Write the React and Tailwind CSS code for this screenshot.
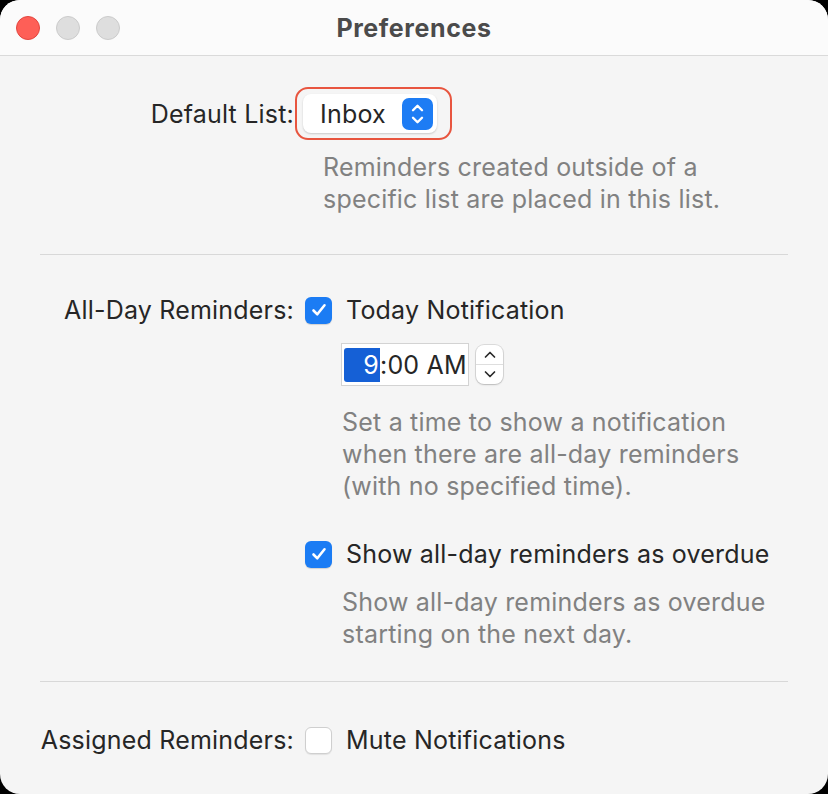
import React from 'react';

const font = { fontFamily: 'Inter, "Noto Sans", sans-serif' };

const Check = ({ checked }) => (
    checked ? (
        <div className="w-[27px] h-[27px] rounded-[6px] bg-[#1b7cf4] flex items-center justify-center shadow-[0_1px_1px_rgba(0,0,0,0.15)]">
            <svg width="18" height="18" viewBox="0 0 18 18" fill="none">
                <path d="M3.5 9.5 L7.3 13.3 L14.5 4.3" stroke="white" strokeWidth="2.6" strokeLinecap="round" strokeLinejoin="round" />
            </svg>
        </div>
    ) : (
        <div className="w-[27px] h-[27px] rounded-[6px] bg-white border border-[#cfcfcf] shadow-[0_1px_1px_rgba(0,0,0,0.08)]" />
    )
);

const Chevrons = ({ color, size = 16 }) => (
    <svg width={size} height={size * 1.6} viewBox="0 0 10 16" fill="none">
        <path d="M2 5.5 L5 2.5 L8 5.5" stroke={color} strokeWidth="1.6" strokeLinecap="round" strokeLinejoin="round" />
        <path d="M2 10.5 L5 13.5 L8 10.5" stroke={color} strokeWidth="1.6" strokeLinecap="round" strokeLinejoin="round" />
    </svg>
);

const Row = ({ label, children, className = '' }) => (
    <div className={`flex items-center ${className}`}>
        <div className="w-[296px] shrink-0 text-right pr-[2px] text-[#262626]">{label}</div>
        <div className="flex items-center">{children}</div>
    </div>
);

export default function App() {
    return (
        <div className="w-[828px] h-[794px] bg-black" style={font}>
            <div className="w-full h-full rounded-[20px] overflow-hidden bg-[#f5f5f5] flex flex-col text-[25px] leading-[32px] tracking-[0.2px]">
                <div className="h-[56px] shrink-0 bg-[#fbfbfb] border-b border-[#dadada] flex items-center relative">
                    <div className="flex items-center gap-[16px] pl-[16px]">
                        <div className="w-[24px] h-[24px] rounded-full bg-[#fe5f57] border border-[#e2463f]" />
                        <div className="w-[24px] h-[24px] rounded-full bg-[#dedede] border border-[#cbcbcb]" />
                        <div className="w-[24px] h-[24px] rounded-full bg-[#dedede] border border-[#cbcbcb]" />
                    </div>
                    <div className="absolute inset-0 flex items-center justify-center font-bold text-[#4b4b4b] text-[25px] tracking-[0.6px]">Preferences</div>
                </div>

                <div className="flex flex-col">
                    <Row label="Default List:" className="mt-[31px]">
                        <div className="ml-[-1px] h-[53px] w-[157px] rounded-[13px] border-[2px] border-[#e8553f] flex items-center pl-[6px] pr-[13px]">
                            <div className="h-[39px] w-full rounded-[8px] bg-white shadow-[0_1px_2px_rgba(0,0,0,0.18)] flex items-center justify-between pl-[17px] pr-[4px]">
                                <span className="text-[#262626]">Inbox</span>
                                <div className="w-[31px] h-[32px] rounded-[7px] bg-[#1d7cf4] flex items-center justify-center">
                                    <Chevrons color="white" size={15} />
                                </div>
                            </div>
                        </div>
                    </Row>
                    <div className="ml-[323px] mt-[11px] text-[#818181]">
                        <div>Reminders created outside of a</div>
                        <div>specific list are placed in this list.</div>
                    </div>

                    <div className="mx-[40px] mt-[39px] h-px bg-[#d8d8d8]" />

                    <Row label="All-Day Reminders:" className="mt-[39px]">
                        <div className="ml-[9px]"><Check checked /></div>
                        <span className="ml-[14px] text-[#262626]">Today Notification</span>
                    </Row>

                    <div className="ml-[341px] mt-[17px] flex items-center">
                        <div className="h-[43px] w-[128px] bg-white border border-[#d3d3d3] flex items-center pl-[2px]">
                            <div className="h-[34px] w-[36px] bg-[#1560d6] rounded-l-[3px] text-white text-right pr-[1px] leading-[34px]">9</div>
                            <span className="text-[#262626]">:00 AM</span>
                        </div>
                        <div className="ml-[7px] h-[39px] w-[27px] rounded-[8px] bg-white shadow-[0_0_0_1px_rgba(0,0,0,0.1),0_1px_2px_rgba(0,0,0,0.15)] flex flex-col">
                            <div className="flex-1 flex items-center justify-center border-b border-[#dedede]">
                                <svg width="14" height="9" viewBox="0 0 14 9" fill="none"><path d="M2.5 7 L7 2.5 L11.5 7" stroke="#2a2a2a" strokeWidth="1.7" strokeLinecap="round" strokeLinejoin="round" /></svg>
                            </div>
                            <div className="flex-1 flex items-center justify-center">
                                <svg width="14" height="9" viewBox="0 0 14 9" fill="none"><path d="M2.5 2 L7 6.5 L11.5 2" stroke="#2a2a2a" strokeWidth="1.7" strokeLinecap="round" strokeLinejoin="round" /></svg>
                            </div>
                        </div>
                    </div>

                    <div className="ml-[342px] mt-[20px] text-[#818181]">
                        <div>Set a time to show a notification</div>
                        <div>when there are all-day reminders</div>
                        <div>(with no specified time).</div>
                    </div>

                    <div className="flex items-center mt-[36px] ml-[305px]">
                        <Check checked />
                        <span className="ml-[14px] text-[#262626]">Show all-day reminders as overdue</span>
                    </div>
                    <div className="ml-[342px] mt-[16px] text-[#818181]">
                        <div>Show all-day reminders as overdue</div>
                        <div>starting on the next day.</div>
                    </div>

                    <div className="mx-[40px] mt-[31px] h-px bg-[#d8d8d8]" />

                    <Row label="Assigned Reminders:" className="mt-[42px]">
                        <div className="ml-[9px]"><Check checked={false} /></div>
                        <span className="ml-[14px] text-[#262626]">Mute Notifications</span>
                    </Row>
                </div>
            </div>
        </div>
    );
}
